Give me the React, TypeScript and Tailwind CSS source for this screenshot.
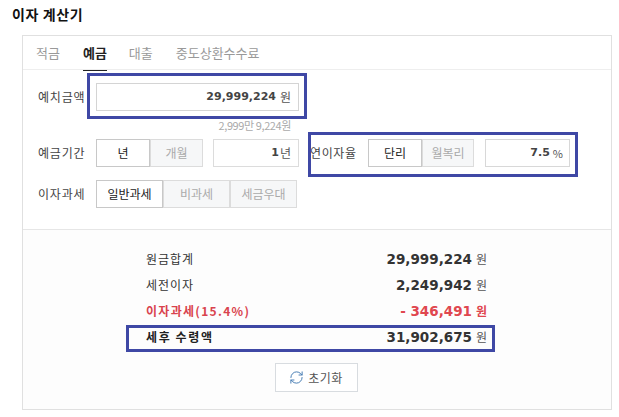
import React from "react";
import { RefreshCw } from "lucide-react";

const kr = "font-['Noto_Sans_CJK_KR',sans-serif]";
const num = "font-['DejaVu_Sans','Noto_Sans_CJK_KR',sans-serif]";

const Toggle = ({ label, active, width }: { label: string; active?: boolean; width: string }) => (
  <div
    className={`${width} h-full flex items-center justify-center text-[12px] border ${
      active ? "bg-white border-[#c8c8c8] text-[#222]" : "bg-[#f6f7f8] border-[#dcdcdc] text-[#aaa]"
    }`}
  >
    {label}
  </div>
);

const ResultRow = ({ label, value, red, bold }: { label: string; value: string; red?: boolean; bold?: boolean }) => (
  <div className="h-[26px] flex items-center justify-between">
    <span
      className={`text-[12px] ${bold ? "font-bold tracking-[1.6px]" : red ? "tracking-[1.3px]" : "tracking-[1px]"} ${
        red ? "font-bold text-[#d9434e]" : bold ? "text-[#222]" : "text-[#333]"
      }`}
    >
      {label}
    </span>
    <span className={`${num} text-[13.5px] font-bold ${red ? "text-[#e0474f]" : "text-[#333]"}`}>
      {value}
      <span className={`${kr} text-[12px] ml-1 ${red ? "font-bold" : "font-normal text-[#555]"}`}>원</span>
    </span>
  </div>
);

export default function App() {
  return (
    <div className={`${kr} w-[619px] h-[417px] bg-white relative overflow-hidden`}>
      <h1 className="pl-3 pt-[4px] h-[35px] text-[14px] font-bold text-[#111] leading-[20px] tracking-[0.6px]">이자 계산기</h1>

      <div className="ml-[22px] w-[590px] h-[375px] border border-[#e0e0e0] flex flex-col">
        {/* tabs */}
        <div className="h-[34px] shrink-0 border-b border-[#eeeeee] flex items-stretch pl-[13px] gap-[23px] text-[13px] text-[#999]">
          <span className="flex items-center">적금</span>
          <span className="flex items-center font-bold text-[#222] border-b border-[#222] h-[35px]">예금</span>
          <span className="flex items-center ml-[-1px]">대출</span>
          <span className="flex items-center">중도상환수수료</span>
        </div>

        {/* form */}
        <div className="h-[159px] shrink-0 pl-[15px] pt-[13px] text-[12px] text-[#444]">
          <div className="flex items-center h-[28px]">
            <span className="w-[58px] tracking-[0.8px]">예치금액</span>
            <div className="w-[203px] h-full border border-[#d4d4d4] flex items-center justify-end pr-[7px]">
              <span className={`${num} text-[11px] font-bold text-[#444]`}>29,999,224</span>
              <span className="ml-1 text-[#555]">원</span>
            </div>
          </div>
          <div className="w-[253px] h-[28px] flex items-center justify-end text-[11px] text-[#aaa] tracking-[-0.4px]">2,999만 9,224원</div>

          <div className="flex items-center h-[28px]">
            <span className="w-[58px] tracking-[0.8px]">예금기간</span>
            <div className="flex h-full">
              <Toggle label="년" active width="w-[54px]" />
              <Toggle label="개월" width="w-[53px]" />
            </div>
            <div className="ml-[10px] w-[86px] h-full border border-[#dcdcdc] flex items-center justify-end pr-[7px]">
              <span className={`${num} text-[11px] font-bold`}>1</span>
              <span className="ml-px text-[#555]">년</span>
            </div>
            <span className="ml-[11px] w-[58px] tracking-[0.6px]">연이자율</span>
            <div className="flex h-full">
              <Toggle label="단리" active width="w-[54px]" />
              <Toggle label="월복리" width="w-[52px]" />
            </div>
            <div className="ml-[11px] w-[85px] h-full border border-[#d8d8d8] flex items-center justify-end pr-[6px]">
              <span className={`${num} text-[11px] font-bold`}>7.5</span>
              <span className="ml-[3px] text-[11px] text-[#555]">%</span>
            </div>
          </div>

          <div className="flex items-center h-[28px] mt-[13px]">
            <span className="w-[58px] tracking-[0.8px]">이자과세</span>
            <div className="flex h-full">
              <Toggle label="일반과세" active width="w-[67px]" />
              <Toggle label="비과세" width="w-[67px]" />
              <Toggle label="세금우대" width="w-[67px]" />
            </div>
          </div>
        </div>

        {/* result */}
        <div className="flex-1 bg-[#fdfdfd] border-t border-[#e6e6e6] flex flex-col items-center pt-[16px]">
          <div className="w-[341px] ml-[-1px]">
            <ResultRow label="원금합계" value="29,999,224" />
            <ResultRow label="세전이자" value="2,249,942" />
            <ResultRow label="이자과세(15.4%)" value="- 346,491" red />
            <ResultRow label="세후 수령액" value="31,902,675" bold />
          </div>
          <button className="mt-[13px] ml-[-2px] w-[83px] h-[29px] border border-[#d8dce0] bg-white flex items-center justify-center gap-[4px] text-[12px] tracking-[0.5px] text-[#555]">
            <RefreshCw className="w-[15px] h-[15px] text-[#4a7fb5]" strokeWidth={1.6} />
            초기화
          </button>
        </div>
      </div>

      {/* blue highlight boxes drawn over the capture */}
      <div className="absolute left-[87px] top-[73px] w-[220px] h-[46px] border-[3px] border-[#3f48a5]" />
      <div className="absolute left-[308px] top-[132px] w-[270px] h-[45px] border-[3px] border-[#3f48a5]" />
      <div className="absolute left-[126px] top-[325px] w-[369px] h-[27px] border-[3px] border-[#3f48a5]" />
    </div>
  );
}
